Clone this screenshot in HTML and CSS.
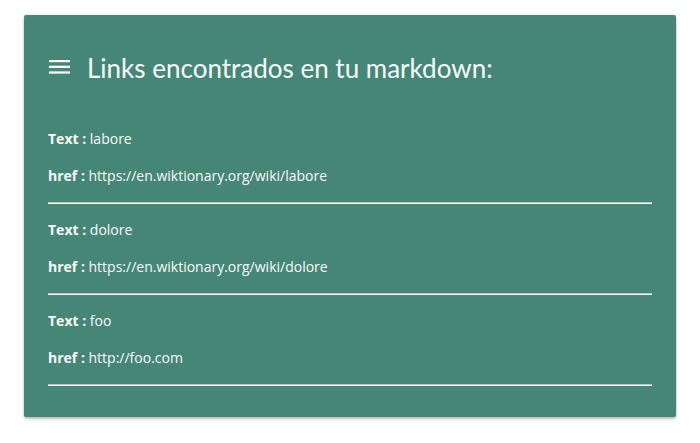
FILE: index.html
```html
<!DOCTYPE html>
<html lang="es">
<head>
<meta charset="utf-8">
<title>Links</title>
<link rel="stylesheet" href="styles.css">
</head>
<body>
<div class="page">
  <section class="card">
    <h2 class="title">
      <svg class="menu-icon" width="21" height="14" viewBox="0 0 21 14" aria-hidden="true">
        <rect x="0" y="0" width="21" height="2.2" fill="#ffffff"/>
        <rect x="0" y="5.7" width="21" height="2.2" fill="#ffffff"/>
        <rect x="0" y="11.4" width="21" height="2.2" fill="#ffffff"/>
      </svg>
      <span>Links encontrados en tu markdown:</span>
    </h2>
    <div class="link">
      <p><b>Text :</b> labore</p>
      <p><b>href :</b> https://en.wiktionary.org/wiki/labore</p>
      <hr>
    </div>
    <div class="link">
      <p><b>Text :</b> dolore</p>
      <p><b>href :</b> https://en.wiktionary.org/wiki/dolore</p>
      <hr>
    </div>
    <div class="link">
      <p><b>Text :</b> foo</p>
      <p><b>href :</b> http://foo.com</p>
      <hr>
    </div>
  </section>
</div>
</body>
</html>
```
FILE: styles.css
```css
html, body {
  margin: 0;
  padding: 0;
  background: #ffffff;
}
.page {
  padding: 15px 24px;
}
.card {
  background: #468677;
  border-radius: 2px;
  box-shadow: 0 2px 3px rgba(0,0,0,0.25), 0 0 2px rgba(0,0,0,0.12);
  padding: 24px 24px 23px 24px;
  color: #ffffff;
  font-family: "Open Sans", "Liberation Sans", sans-serif;
  font-size: 14px;
}
.title {
  display: flex;
  align-items: center;
  gap: 17px;
  margin: 13px 0 44px 1px;
  font-family: Lato, "Noto Sans", sans-serif;
  font-weight: 400;
  font-size: 26px;
  line-height: 32px;
  color: #f7fbfa;
}
.menu-icon {
  flex: none;
  margin-top: -2px;
}
.link p {
  margin: 15px 0;
  line-height: 22px;
  color: #f8faf9;
}
.link b {
  font-weight: 700;
}
.link hr {
  margin: 8px 0;
  height: 0;
  border: 0;
  border-top: 1px solid #b9c4c1;
  border-bottom: 1px solid #ffffff;
}
```
